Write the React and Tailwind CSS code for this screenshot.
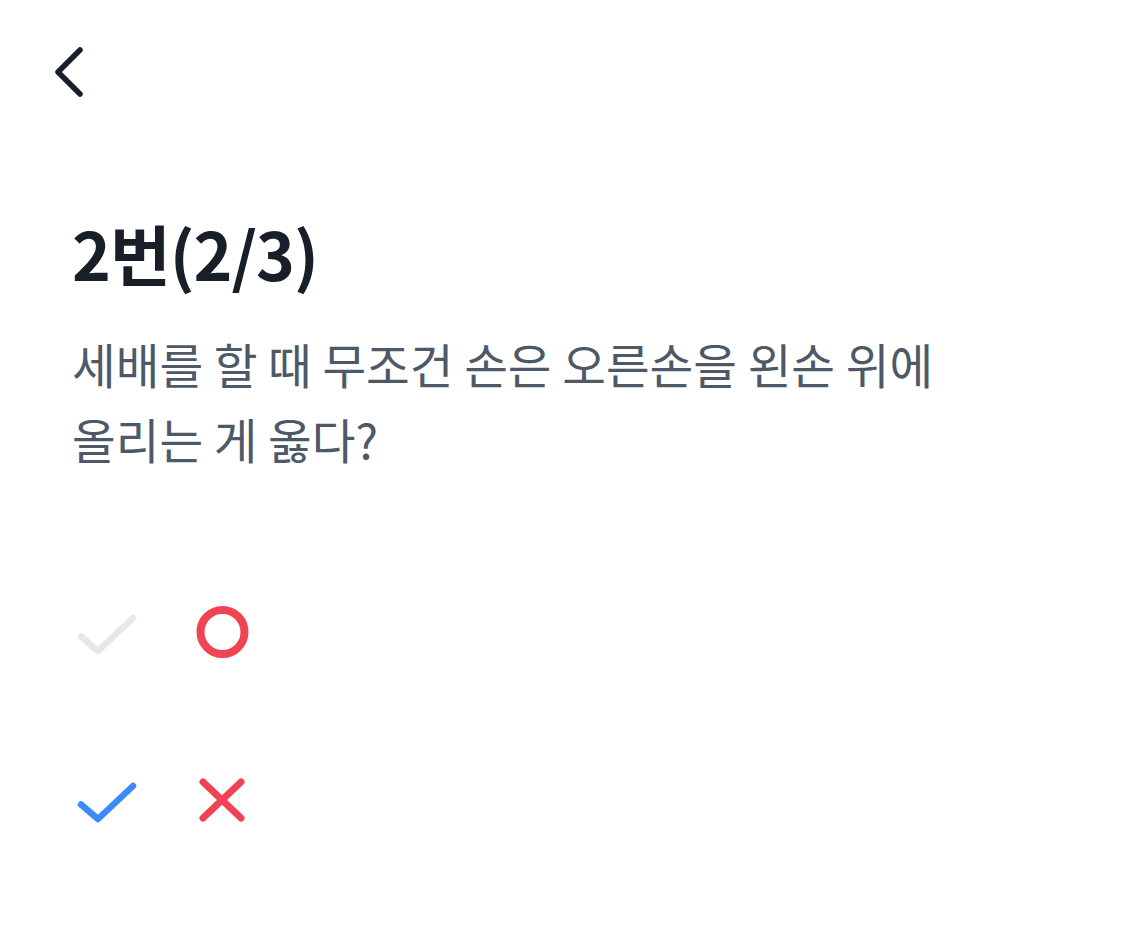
import React from 'react';

const font = { fontFamily: '"Noto Sans CJK KR", "Noto Sans", sans-serif' };

const BackIcon = () => (
  <svg width="40" height="60" viewBox="0 0 40 60" fill="none">
    <path d="M30 8 L8 30 L30 52" stroke="#191f28" strokeWidth="5.5" strokeLinecap="round" strokeLinejoin="round" />
  </svg>
);

const Check = ({ color }) => (
  <svg width="66" height="56" viewBox="0 0 66 56" fill="none">
    <path d="M7 32.5 L24 47 L59 14" stroke={color} strokeWidth="6.5" strokeLinecap="round" strokeLinejoin="round" />
  </svg>
);

const Circle = () => (
  <svg width="56" height="56" viewBox="0 0 56 56" fill="none">
    <circle cx="28.5" cy="28" r="22" stroke="#f04452" strokeWidth="8" />
  </svg>
);

const Cross = () => (
  <svg width="56" height="56" viewBox="0 0 56 56" fill="none">
    <path d="M9 10 L47 46 M47 10 L9 46" stroke="#f04452" strokeWidth="7" strokeLinecap="round" />
  </svg>
);

export default function App() {
  return (
    <div className="w-[1125px] h-[925px] bg-white overflow-hidden" style={font}>
      {/* Header */}
      <div className="pl-[50px] pt-[42px] h-[212px]">
        <BackIcon />
      </div>

      {/* Question */}
      <div className="px-[72px]">
        <h1 className="text-[66px] leading-[80px] font-bold text-[#191f28] tracking-[-1px]">2번(2/3)</h1>
        <p className="mt-[34px] text-[47.5px] leading-[75px] text-[#4e5968]">
          세배를 할 때 무조건 손은 오른손을 왼손 위에
          <br />
          올리는 게 옳다?
        </p>
      </div>

      {/* Answers */}
      <div className="mt-[128px] pl-[74px] flex flex-col gap-[112px]">
        <div className="flex items-center gap-[54px]">
          <Check color="#e5e8eb" />
          <Circle />
        </div>
        <div className="flex items-center gap-[54px]">
          <Check color="#3d8bf8" />
          <Cross />
        </div>
      </div>
    </div>
  );
}
